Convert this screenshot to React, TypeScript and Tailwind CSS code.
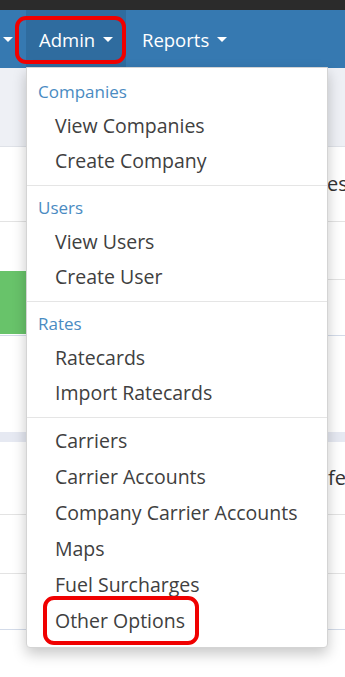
import React from "react";

const Caret = () => (
  <span className="inline-block w-0 h-0 border-l-[5px] border-r-[5px] border-t-[5px] border-l-transparent border-r-transparent border-t-white" />
);

const Header = ({ children }: { children: React.ReactNode }) => (
  <div className="h-[32px] flex items-center pl-[11px] text-[17px] text-[#4a8bc2]">{children}</div>
);

const Item = ({ children, tall }: { children: React.ReactNode; tall?: boolean }) => (
  <div className={(tall ? "h-9" : "h-[35px]") + " flex items-center pl-[28px] text-[19.5px] text-[#404040] whitespace-nowrap"}>
    {children}
  </div>
);

const Divider = ({ last }: { last?: boolean }) => (
  <div className={(last ? "mb-[5px]" : "mb-[6px]") + " mt-[7px] h-px bg-[#e5e5e5]"} />
);

export default function App() {
  return (
    <div
      className="relative w-[345px] h-[677px] overflow-hidden bg-white"
      style={{ fontFamily: '"Open Sans", "Noto Sans", sans-serif' }}
    >
      <div className="h-[10px] bg-[#2b2b2b]" />
      <nav className="h-[58px] bg-[#3679b1] flex items-stretch text-white text-[18.5px]">
        <div className="w-[26px] flex items-center pl-[3px]">
          <Caret />
        </div>
        <div className="w-[100px] bg-[#2f6c9f] flex items-center pl-[13px] gap-[8px] pt-[1px]">
          <span>Admin</span>
          <Caret />
        </div>
        <div className="flex items-center pl-[16px] gap-[8px] pt-[1px]">
          <span>Reports</span>
          <Caret />
        </div>
      </nav>

      <div className="flex flex-col text-[20px] text-[#333]">
        <div className="h-[79px] bg-[#eef0f5] border-b border-[#dfe2e8]" />
        <div className="h-[75px] border-b border-[#e3e3e3] flex items-center">
          <span className="ml-[327px] whitespace-nowrap">es</span>
        </div>
        <div className="h-[58px] border-b border-[#e3e3e3]">
          <div className="relative mt-[49px] h-[63px] w-[27px] bg-[#68c36a]" />
        </div>
        <div className="h-[56px] border-b border-[#d3dbe9]" />
        <div className="h-[96px]" />
        <div className="h-[10px] bg-[#e6e9f2]" />
        <div className="h-[73px] border-b border-[#e3e3e3] flex items-center">
          <span className="ml-[328px] whitespace-nowrap">fe</span>
        </div>
        <div className="h-[59px] border-b border-[#e3e3e3]" />
        <div className="h-[56px] border-b border-[#d3dbe9]" />
      </div>

      <div className="absolute left-[26px] top-[67px] w-[302px] bg-white border border-[#d4d4d4] rounded-b-[4px] shadow-[0_6px_14px_rgba(0,0,0,0.22)] pt-[8px] pb-[8px]">
        <Header>Companies</Header>
        <Item>View Companies</Item>
        <Item>Create Company</Item>
        <Divider />
        <Header>Users</Header>
        <Item>View Users</Item>
        <Item>Create User</Item>
        <Divider />
        <Header>Rates</Header>
        <Item>Ratecards</Item>
        <Item>Import Ratecards</Item>
        <Divider last />
        <Item tall>Carriers</Item>
        <Item tall>Carrier Accounts</Item>
        <Item tall>Company Carrier Accounts</Item>
        <Item tall>Maps</Item>
        <Item tall>Fuel Surcharges</Item>
        <Item tall>Other Options</Item>
      </div>

      <div className="absolute left-[15px] top-[16px] w-[111px] h-[48px] border-[4px] border-[#f00000] rounded-[11px]" />
      <div className="absolute left-[43px] top-[596px] w-[156px] h-[49px] border-[4px] border-[#f00000] rounded-[11px]" />
    </div>
  );
}
